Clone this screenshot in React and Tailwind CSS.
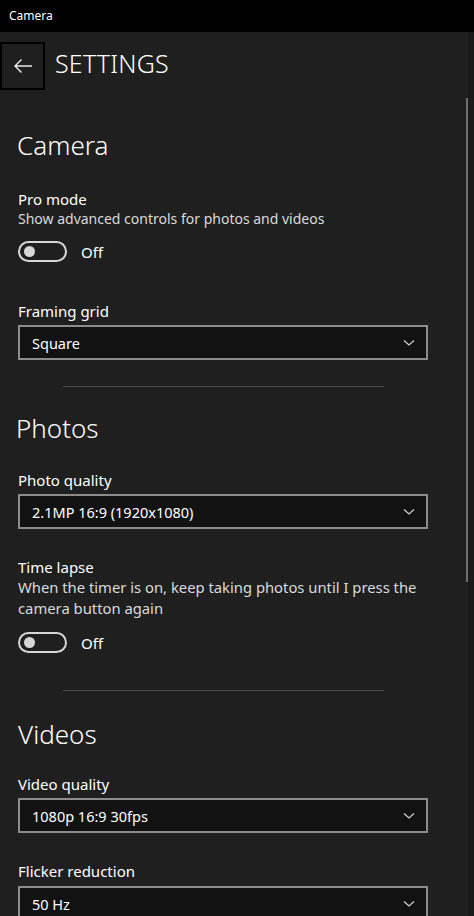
import { useState } from "react";

const font = { fontFamily: '"Noto Sans", "Segoe UI", "Liberation Sans", sans-serif' };

const Toggle = ({ on, onChange }) => (
  <div className="flex items-center">
    <button
      onClick={onChange}
      className="w-[49px] h-[21px] rounded-full border-2 border-[#d6d6d6] flex items-center px-[4px]"
    >
      <span
        className={
          "block w-[11px] h-[11px] rounded-full bg-[#d6d6d6] " + (on ? "ml-auto" : "")
        }
      />
    </button>
    <span className="ml-[14px] text-[15px] text-white leading-5">{on ? "On" : "Off"}</span>
  </div>
);

const Dropdown = ({ value }) => (
  <div className="w-[410px] h-[35px] border-2 border-[#8c8c8c] bg-[#121212] flex items-center justify-between pl-[12px] pr-[11px]">
    <span className="text-[14.5px] text-white leading-5">{value}</span>
    <svg width="12" height="8" viewBox="0 0 12 8" fill="none">
      <polyline points="1,1.5 6,6 11,1.5" stroke="#d0d0d0" strokeWidth="1.2" />
    </svg>
  </div>
);

const Divider = () => <div className="ml-[63px] w-[321px] h-px bg-[#474747]" />;

const App = () => {
  const [pro, setPro] = useState(false);
  const [lapse, setLapse] = useState(false);

  return (
    <div className="w-[474px] h-[916px] bg-[#1f1f1f] overflow-hidden relative" style={font}>
      {/* title bar */}
      <div className="h-[32px] bg-black flex items-center pl-[9px] text-[12px] text-white">Camera</div>

      {/* header */}
      <div className="flex items-center mt-[10px]">
        <div className="w-[45px] h-[48px] border-2 border-black flex items-center justify-center">
          <svg width="20" height="16" viewBox="0 0 20 16" fill="none">
            <path d="M19 8H2M8.5 1.5L2 8l6.5 6.5" stroke="#ececec" strokeWidth="1.4" />
          </svg>
        </div>
        <h1 className="ml-[10px] -mt-[7px] text-[25px] font-light text-white leading-8 tracking-[0.2px]">SETTINGS</h1>
      </div>

      <div className="pl-[18px]">
        {/* Camera */}
        <h2 className="mt-[37px] -ml-[1px] text-[26px] font-light text-white leading-9">Camera</h2>
        <p className="mt-[26px] text-[15px] text-white leading-5">Pro mode</p>
        <p className="text-[14px] text-[#dadada] leading-5">Show advanced controls for photos and videos</p>
        <div className="mt-[12px]">
          <Toggle on={pro} onChange={() => setPro(!pro)} />
        </div>
        <p className="mt-[39px] text-[15px] text-white leading-5">Framing grid</p>
        <div className="mt-[4px]">
          <Dropdown value="Square" />
        </div>
      </div>

      <div className="mt-[26px]">
        <Divider />
      </div>

      <div className="pl-[18px]">
        {/* Photos */}
        <h2 className="mt-[23px] -ml-[2px] text-[26px] font-light text-white leading-9">Photos</h2>
        <p className="mt-[24px] text-[15px] text-white leading-5">Photo quality</p>
        <div className="mt-[4px]">
          <Dropdown value="2.1MP 16:9 (1920x1080)" />
        </div>
        <p className="mt-[28px] text-[15px] text-white leading-5">Time lapse</p>
        <p className="w-[420px] text-[14.8px] text-[#dadada] leading-[21px]">
          When the timer is on, keep taking photos until I press the camera button again
        </p>
        <div className="mt-[13px]">
          <Toggle on={lapse} onChange={() => setLapse(!lapse)} />
        </div>
      </div>

      <div className="mt-[37px]">
        <Divider />
      </div>

      <div className="pl-[18px]">
        {/* Videos */}
        <h2 className="mt-[25px] text-[26px] font-light text-white leading-9">Videos</h2>
        <p className="mt-[22px] text-[15px] text-white leading-5">Video quality</p>
        <div className="mt-[4px]">
          <Dropdown value="1080p 16:9 30fps" />
        </div>
        <p className="mt-[28px] text-[15px] text-white leading-5">Flicker reduction</p>
        <div className="mt-[5px]">
          <Dropdown value="50 Hz" />
        </div>
      </div>

      {/* scrollbar */}
      <div className="absolute left-[466px] top-[98px] w-[2px] h-[484px] bg-[#6e6e6e]" />
      <div className="absolute left-[468px] top-[32px] w-[6px] h-[884px] bg-[#1a1a1a]" />
    </div>
  );
};

export default App;
